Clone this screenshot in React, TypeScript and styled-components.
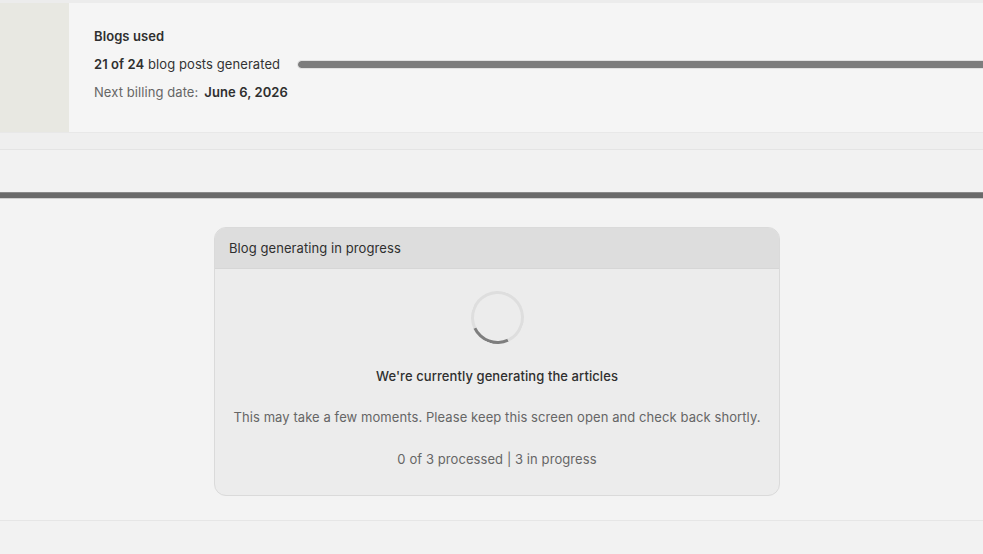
import React from "react";
import styled, { createGlobalStyle } from "styled-components";

const Global = createGlobalStyle`
  html, body { margin: 0; padding: 0; background: #f2f2f2; }
  body { font-family: Inter, "Noto Sans", "Liberation Sans", sans-serif; color: #333; letter-spacing: 0.08px; }
  * { box-sizing: border-box; }
`;

const Page = styled.div`
  width: 983px;
  height: 554px;
  overflow: hidden;
  display: flex;
  flex-direction: column;
  background: #f2f2f2;
`;

const TopStrip = styled.div`
  height: 3px;
  background: #ececec;
`;

const UsagePanel = styled.section`
  display: flex;
  height: 130px;
  background: #f5f5f5;
  border-bottom: 1px solid #e8e8e8;
`;

const SideBlock = styled.div`
  width: 69px;
  background: #e8e8e2;
`;

const UsageBody = styled.div`
  flex: 1;
  display: flex;
  flex-direction: column;
  gap: 8px;
  padding: 23px 0 0 25px;
  font-size: 13px;
  line-height: 20px;
`;

const Title = styled.div`
  font-weight: 600;
  color: #2f2f2f;
`;

const UsageRow = styled.div`
  display: flex;
  align-items: center;
  gap: 17px;
  color: #333;
`;

const Strong = styled.span`
  font-weight: 600;
  color: #2f2f2f;
`;

const Muted = styled.span`
  color: #666;
  margin-right: 6px;
`;

const Track = styled.div`
  flex: 1;
  height: 9px;
  margin-right: -20px;
  border-radius: 5px;
  background: #dcdcdc;
  border: 1px solid #e2e2e2;
  overflow: hidden;
`;

const Fill = styled.div`
  height: 100%;
  background: #7d7d7d;
  border-radius: 5px;
`;

const SubStrip = styled.div`
  height: 17px;
  background: #efefef;
  border-bottom: 1px solid #e4e4e4;
`;

const Gap = styled.div`
  height: 42px;
  background: #f2f2f2;
`;

const DarkRule = styled.div`
  height: 7px;
  background: #6a6a6a;
  border-top: 1px solid #8a8a8a;
  border-bottom: 1px solid #cfcfcf;
`;

const Main = styled.main`
  display: flex;
  justify-content: center;
  padding: 28px 0 24px 11px;
  background: #f3f3f3;
  border-bottom: 1px solid #e6e6e6;
`;

const Card = styled.div`
  width: 566px;
  border: 1px solid #dadada;
  border-radius: 12px;
  overflow: hidden;
  background: #ececec;
`;

const CardHeader = styled.div`
  height: 41px;
  display: flex;
  align-items: center;
  padding-left: 14px;
  background: #dddddd;
  border-bottom: 1px solid #d6d6d6;
  font-size: 13px;
  color: #2f2f2f;
`;

const CardBody = styled.div`
  display: flex;
  flex-direction: column;
  align-items: center;
  padding: 22px 0 26px;
  font-size: 13px;
  line-height: 20px;
`;

const Spinner = styled.div`
  width: 53px;
  height: 53px;
  border-radius: 50%;
  border: 3px solid #dedede;
  border-bottom-color: #7e7e7e;
  transform: rotate(20deg);
`;

const Heading = styled.div`
  margin-top: 22px;
  font-weight: 500;
  color: #2f2f2f;
`;

const Note = styled.div`
  margin-top: 21px;
  color: #666;
`;

const Counter = styled.div`
  margin-top: 22px;
  color: #666;
`;

export default function App() {
  const used = 21;
  const total = 24;
  return (
    <Page>
      <Global />
      <TopStrip />
      <UsagePanel>
        <SideBlock />
        <UsageBody>
          <Title>Blogs used</Title>
          <UsageRow>
            <span>
              <Strong>
                {used} of {total}
              </Strong>{" "}
              blog posts generated
            </span>
            <Track>
              <Fill style={{ width: `${(used / total) * 100 + 20}%` }} />
            </Track>
          </UsageRow>
          <UsageRow>
            <span>
              <Muted>Next billing date:</Muted>
              <Strong>June 6, 2026</Strong>
            </span>
          </UsageRow>
        </UsageBody>
      </UsagePanel>
      <SubStrip />
      <Gap />
      <DarkRule />
      <Main>
        <Card>
          <CardHeader>Blog generating in progress</CardHeader>
          <CardBody>
            <Spinner />
            <Heading>We're currently generating the articles</Heading>
            <Note>
              This may take a few moments. Please keep this screen open and
              check back shortly.
            </Note>
            <Counter>0 of 3 processed | 3 in progress</Counter>
          </CardBody>
        </Card>
      </Main>
    </Page>
  );
}
